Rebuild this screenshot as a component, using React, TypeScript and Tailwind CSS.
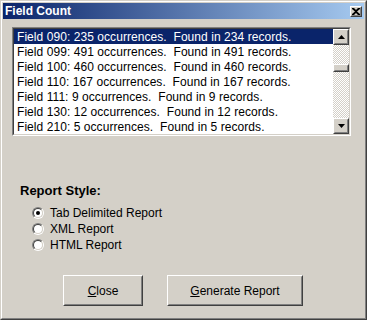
import React from "react";

const rows = [
  "Field 090: 235 occurrences.  Found in 234 records.",
  "Field 099: 491 occurrences.  Found in 491 records.",
  "Field 100: 460 occurrences.  Found in 460 records.",
  "Field 110: 167 occurrences.  Found in 167 records.",
  "Field 111: 9 occurrences.  Found in 9 records.",
  "Field 130: 12 occurrences.  Found in 12 records.",
  "Field 210: 5 occurrences.  Found in 5 records.",
];

function Raised({ className = "", children }: { className?: string; children?: React.ReactNode }) {
  return (
    <div className={"border border-t-white border-l-white border-r-[#404040] border-b-[#404040] " + className}>
      <div className="w-full h-full border border-t-[#d4d0c8] border-l-[#d4d0c8] border-r-[#808080] border-b-[#808080] bg-[#d4d0c8] flex items-center justify-center">
        {children}
      </div>
    </div>
  );
}

function Radio({ checked, label }: { checked?: boolean; label: string }) {
  return (
    <div className="flex items-center h-[16px]">
      <div className="w-[12px] h-[12px] rounded-full border border-t-[#808080] border-l-[#808080] border-r-white border-b-white ml-[29px]">
        <div className="w-full h-full rounded-full border border-t-[#404040] border-l-[#404040] border-r-[#d4d0c8] border-b-[#d4d0c8] bg-white flex items-center justify-center">
          {checked && <div className="w-[4px] h-[4px] rounded-full bg-black" />}
        </div>
      </div>
      <span className="ml-[6px] text-[12px] text-black leading-none">{label}</span>
    </div>
  );
}

export default function App() {
  return (
    <div
      className="w-[367px] h-[320px] border border-t-[#d4d0c8] border-l-[#d4d0c8] border-r-[#404040] border-b-[#404040]"
      style={{ fontFamily: '"Liberation Sans", Arial, sans-serif' }}
    >
      <div className="w-full h-full border border-t-white border-l-white border-r-[#808080] border-b-[#808080] bg-[#d4d0c8] p-[1px] flex flex-col">
        {/* Title bar */}
        <div className="h-[16px] flex items-center justify-between bg-[linear-gradient(to_right,#0a246a,#a6caf0)] pl-[2px] pr-[2px]">
          <span className="text-white font-bold text-[12px] leading-none">Field Count</span>
          <Raised className="w-[12px] h-[11px]">
            <svg width="8" height="7" viewBox="0 0 8 7">
              <path d="M0 0h2l2 2l2-2h2v1l-3 2.5l3 2.5v1h-2l-2-2l-2 2h-2v-1l3-2.5l-3-2.5z" fill="#000" />
            </svg>
          </Raised>
        </div>

        {/* List box */}
        <div className="mt-[8px] ml-[9px] w-[339px] h-[109px] border border-t-[#808080] border-l-[#808080] border-r-white border-b-white">
          <div className="w-full h-full border border-t-[#404040] border-l-[#404040] border-r-[#d4d0c8] border-b-[#d4d0c8] bg-white flex">
            <div className="flex-1 flex flex-col">
              {rows.map((r, i) => (
                <div
                  key={i}
                  className={
                    "h-[15px] flex items-center pl-[3px] text-[12px] tracking-[0.06px] whitespace-pre leading-none " +
                    (i === 0 ? "bg-[#0a246a] text-white" : "text-black")
                  }
                >
                  {r}
                </div>
              ))}
            </div>
            <div className="w-[16px] flex flex-col bg-[conic-gradient(#d4d0c8_25%,#ffffff_0_50%,#d4d0c8_0_75%,#ffffff_0)] bg-[length:2px_2px]">
              <Raised className="w-[16px] h-[16px]">
                <svg width="7" height="4" viewBox="0 0 7 4"><path d="M3.5 0L7 4H0z" fill="#000" /></svg>
              </Raised>
              <div className="h-[19px]" />
              <Raised className="w-[16px] h-[8px]" />
              <div className="flex-1" />
              <Raised className="w-[16px] h-[16px]">
                <svg width="7" height="4" viewBox="0 0 7 4"><path d="M0 0H7L3.5 4z" fill="#000" /></svg>
              </Raised>
            </div>
          </div>
        </div>

        {/* Report style */}
        <div className="mt-[48px] ml-[17px] text-[13px] font-bold text-black leading-none">Report Style:</div>
        <div className="mt-[8px] flex flex-col">
          <Radio checked label="Tab Delimited Report" />
          <Radio label="XML Report" />
          <Radio label="HTML Report" />
        </div>

        {/* Buttons */}
        <div className="mt-[22px] flex">
          <Raised className="ml-[60px] w-[80px] h-[31px]">
            <span className="text-[12px] text-black">
              <span className="underline">C</span>lose
            </span>
          </Raised>
          <Raised className="ml-[24px] w-[136px] h-[31px]">
            <span className="text-[12px] text-black">
              <span className="underline">G</span>enerate Report
            </span>
          </Raised>
        </div>
      </div>
    </div>
  );
}
